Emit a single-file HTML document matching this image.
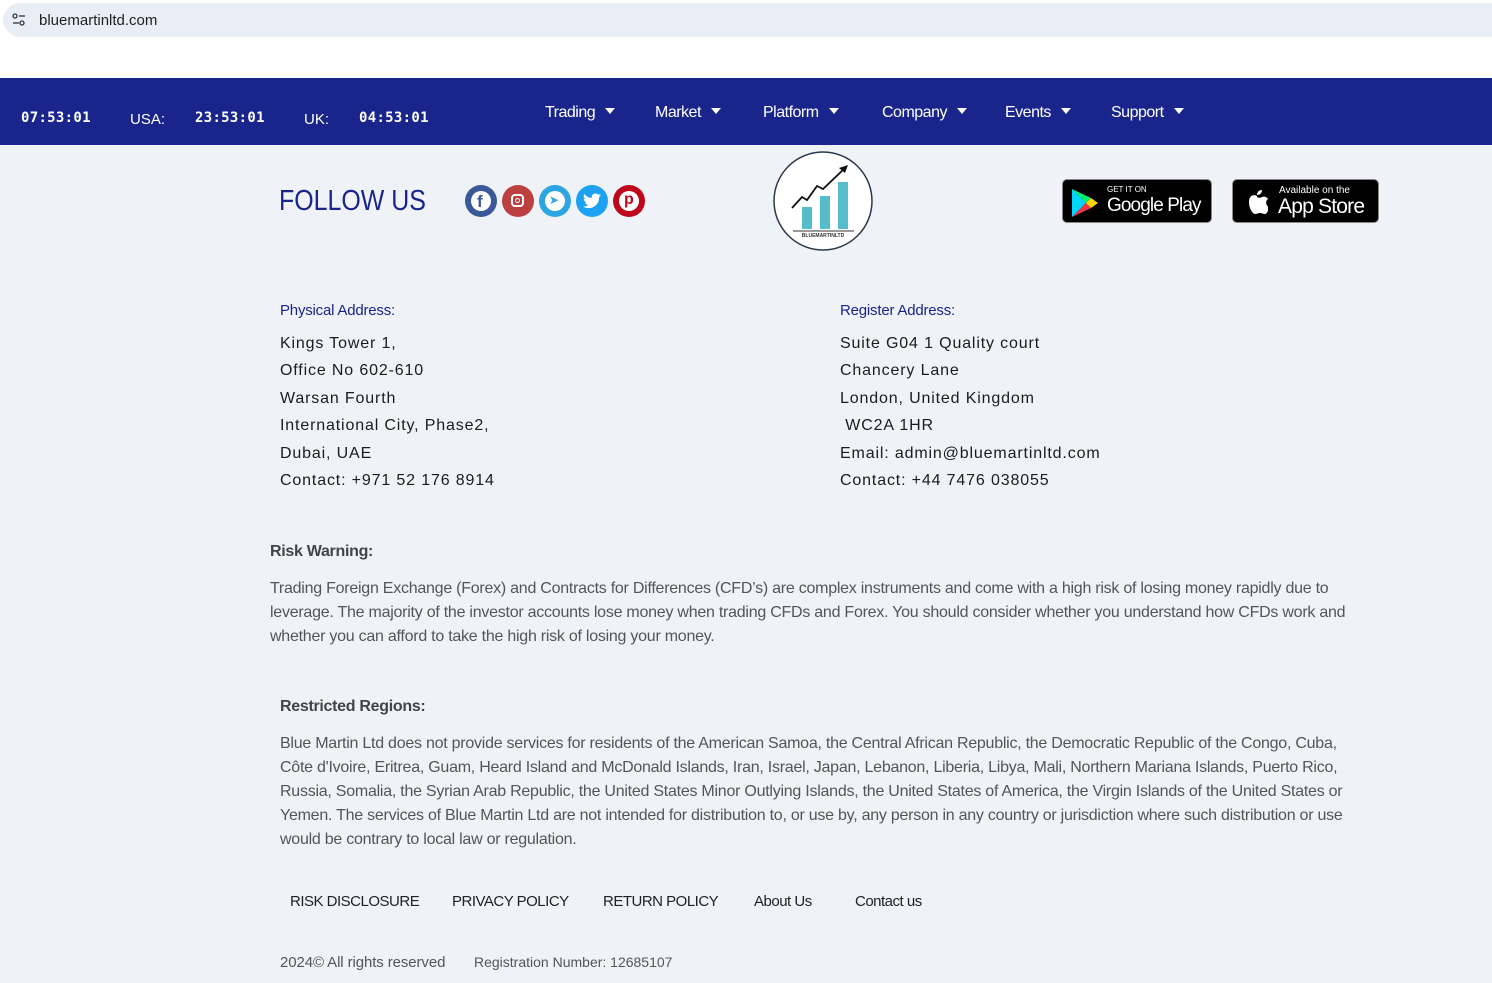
<!DOCTYPE html>
<html><head><meta charset="utf-8"><style>
*{margin:0;padding:0;box-sizing:border-box}
body{width:1492px;height:983px;overflow:hidden;background:#eff2f6;font-family:"Liberation Sans",sans-serif;position:relative}
.abs{position:absolute;white-space:nowrap}
.top{position:absolute;left:0;top:0;width:1492px;height:78px;background:#fff}
.url{position:absolute;left:3px;top:3px;width:1489px;height:34px;background:#e9eef6;border-radius:17px 0 0 17px}
.nav{position:absolute;left:0;top:78px;width:1492px;height:67px;background:#1a258c;color:#fff}
.nav .t{font-family:"DejaVu Sans Mono",monospace;font-weight:bold;font-size:14px;top:32px;letter-spacing:0.3px}
.nav .l{font-size:15px;top:33px}
.menu{font-size:16px;top:26px;letter-spacing:-0.5px}
.menu:after{content:"";display:inline-block;margin-left:10px;border-left:5px solid transparent;border-right:5px solid transparent;border-top:6px solid #fff;vertical-align:3px}
.soc{position:absolute;top:185px;width:32px;height:32px;border-radius:50%}
.addr{font-size:16px;letter-spacing:0.85px;color:#1c1c1c;line-height:27.4px}
.h{font-size:15px;color:#1a258c;font-weight:normal;letter-spacing:-0.2px}
.p{font-size:16px;color:#555;line-height:24px;white-space:normal;letter-spacing:-0.25px}
.b{font-size:16px;color:#444;font-weight:bold;letter-spacing:-0.3px}
.f{font-size:15px;color:#222;top:893px;letter-spacing:-0.5px}
</style></head><body>
<div class="top"><div class="url">
<svg class="abs" style="left:9px;top:10px" width="14" height="14" viewBox="0 0 14 14"><circle cx="3" cy="3" r="2" fill="none" stroke="#333" stroke-width="1.3"/><line x1="7" y1="3" x2="13" y2="3" stroke="#333" stroke-width="1.3"/><circle cx="10" cy="10" r="2" fill="none" stroke="#333" stroke-width="1.3"/><line x1="1" y1="10" x2="7" y2="10" stroke="#333" stroke-width="1.3"/></svg>
<div class="abs" style="left:36px;top:9px;font-size:15px;color:#222">bluemartinltd.com</div></div></div>
<div class="nav">
<div class="abs t" style="left:21px">07:53:01</div>
<div class="abs l" style="left:130px">USA:</div>
<div class="abs t" style="left:195px">23:53:01</div>
<div class="abs l" style="left:304px">UK:</div>
<div class="abs t" style="left:359px">04:53:01</div>
<div class="abs menu" style="left:545px">Trading</div>
<div class="abs menu" style="left:655px">Market</div>
<div class="abs menu" style="left:763px">Platform</div>
<div class="abs menu" style="left:882px">Company</div>
<div class="abs menu" style="left:1005px">Events</div>
<div class="abs menu" style="left:1111px">Support</div>
</div>
<div class="abs" style="left:279px;top:185px;font-size:29px;color:#1a258c;transform:scaleX(0.86);transform-origin:left">FOLLOW US</div>
<div class="soc" style="left:465px;background:#3b5998"></div>
<div class="soc" style="left:502px;background:#bc4040"></div>
<div class="soc" style="left:539px;background:#2ca5e0"></div>
<div class="soc" style="left:576px;background:#1da1f2"></div>
<div class="soc" style="left:613px;background:#bd081c"></div>
<div class="abs" style="left:471px;top:191px;width:20px;height:20px;border-radius:50%;background:#fff"></div>
<div class="abs" style="left:477px;top:192px;color:#3b5998;font-weight:bold;font-size:17px">f</div>
<div class="abs" style="left:511px;top:194px;width:13px;height:13px;border:2px solid #fff;border-radius:4px"></div>
<div class="abs" style="left:515px;top:198px;width:5px;height:5px;border:1.5px solid #fff;border-radius:50%"></div>
<div class="abs" style="left:545px;top:191px;width:20px;height:20px;border-radius:50%;background:#fff"></div>
<div class="abs" style="left:549px;top:193px;color:#2ca5e0;font-size:12px">➤</div>
<svg class="abs" style="left:583px;top:193px" width="18" height="16" viewBox="0 0 24 20"><path d="M24 2.4a10 10 0 0 1-2.8.8A5 5 0 0 0 23.3.4a10 10 0 0 1-3.1 1.2A4.9 4.9 0 0 0 11.8 6 14 14 0 0 1 1.700.9a4.9 4.9 0 0 0 1.5 6.6A4.9 4.9 0 0 1 1 6.9a4.9 4.9 0 0 0 3.9 4.9 5 5 0 0 1-2.2.1 4.9 4.9 0 0 0 4.6 3.4A9.9 9.9 0 0 1 0 17.3 14 14 0 0 0 7.5 19.5c9.1 0 14-7.5 14-14v-.6A10 10 0 0 0 24 2.4z" fill="#fff"/></svg>
<div class="abs" style="left:619px;top:191px;width:20px;height:20px;border-radius:50%;background:#fff"></div>
<div class="abs" style="left:624px;top:191px;color:#bd081c;font-weight:bold;font-size:16px">p</div>
<svg class="abs" style="left:773px;top:151px" width="100" height="100" viewBox="0 0 100 100"><ellipse cx="50" cy="50" rx="49" ry="49" fill="#fff" stroke="#2a3a4a" stroke-width="1.5"/><rect x="29" y="56" width="10" height="22" fill="#55bcc9"/><rect x="47" y="45" width="10" height="33" fill="#55bcc9"/><rect x="65" y="31" width="10" height="47" fill="#55bcc9"/><polyline points="19,57 29,46 34,49 44,35 50,38 72,17" fill="none" stroke="#111" stroke-width="1.8"/><polygon points="75,14 66,17 72,22" fill="#111"/><line x1="20" y1="80" x2="81" y2="80" stroke="#333"/><text x="50" y="86" font-size="5" text-anchor="middle" font-weight="bold" fill="#333">BLUEMARTINLTD</text></svg>
<div class="abs" style="left:1062px;top:179px;width:150px;height:44px;background:#000;border:1px solid #888;border-radius:5px;color:#fff">
<svg class="abs" style="left:9px;top:9px" width="26" height="28" viewBox="0 0 26 28"><polygon points="0,0 14,14 0,28" fill="#00d7fe"/><polygon points="0,0 19,9 14,14" fill="#00f076"/><polygon points="0,28 19,19 14,14" fill="#f83345"/><polygon points="19,9 26,14 19,19 14,14" fill="#ffd500"/></svg>
<div class="abs" style="left:44px;top:5px;font-size:8px">GET IT ON</div>
<div class="abs" style="left:44px;top:15px;font-size:19px;letter-spacing:-0.9px">Google Play</div></div>
<div class="abs" style="left:1232px;top:179px;width:147px;height:44px;background:#000;border:1px solid #888;border-radius:5px;color:#fff">
<svg class="abs" style="left:13px;top:9px" width="22" height="26" viewBox="0 0 22 26"><path d="M11 7C8 5 3 6 3 13s4 12 6 12 3-1 5-1 3 1 5 1 4-5 4-7c-3-1-4-6-1-8-1-2-4-3-6-2-2 1-3 1-5 0z M11 6c0-3 2-5 5-5 0 3-2 5-5 5z" fill="#fff"/></svg>
<div class="abs" style="left:46px;top:5px;font-size:10px">Available on the</div>
<div class="abs" style="left:45px;top:15px;font-size:21px;letter-spacing:-0.8px">App Store</div></div>
<div class="abs h" style="left:280px;top:302px">Physical Address:</div>
<div class="abs addr" style="left:280px;top:330px">Kings Tower 1,<br>Office No 602-610<br>Warsan Fourth<br>International City, Phase2,<br>Dubai, UAE<br>Contact: +971 52 176 8914</div>
<div class="abs h" style="left:840px;top:302px">Register Address:</div>
<div class="abs addr" style="left:840px;top:330px">Suite G04 1 Quality court<br>Chancery Lane<br>London, United Kingdom<br>&nbsp;WC2A 1HR<br>Email: admin@bluemartinltd.com<br>Contact: +44 7476 038055</div>
<div class="abs b" style="left:270px;top:543px">Risk Warning:</div>
<div class="abs p" style="left:270px;top:577px;width:1110px">Trading Foreign Exchange (Forex) and Contracts for Differences (CFD’s) are complex instruments and come with a high risk of losing money rapidly due to leverage. The majority of the investor accounts lose money when trading CFDs and Forex. You should consider whether you understand how CFDs work and whether you can afford to take the high risk of losing your money.</div>
<div class="abs b" style="left:280px;top:698px">Restricted Regions:</div>
<div class="abs p" style="left:280px;top:732px;width:1088px">Blue Martin Ltd does not provide services for residents of the American Samoa, the Central African Republic, the Democratic Republic of the Congo, Cuba, Côte d'Ivoire, Eritrea, Guam, Heard Island and McDonald Islands, Iran, Israel, Japan, Lebanon, Liberia, Libya, Mali, Northern Mariana Islands, Puerto Rico, Russia, Somalia, the Syrian Arab Republic, the United States Minor Outlying Islands, the United States of America, the Virgin Islands of the United States or Yemen. The services of Blue Martin Ltd are not intended for distribution to, or use by, any person in any country or jurisdiction where such distribution or use would be contrary to local law or regulation.</div>
<div class="abs f" style="left:290px">RISK DISCLOSURE</div>
<div class="abs f" style="left:452px">PRIVACY POLICY</div>
<div class="abs f" style="left:603px">RETURN POLICY</div>
<div class="abs f" style="left:754px">About Us</div>
<div class="abs f" style="left:855px">Contact us</div>
<div class="abs" style="left:280px;top:954px;font-size:15px;color:#555;letter-spacing:-0.1px">2024© All rights reserved</div>
<div class="abs" style="left:474px;top:954px;font-size:14px;color:#555">Registration Number: 12685107</div>
</body></html>
